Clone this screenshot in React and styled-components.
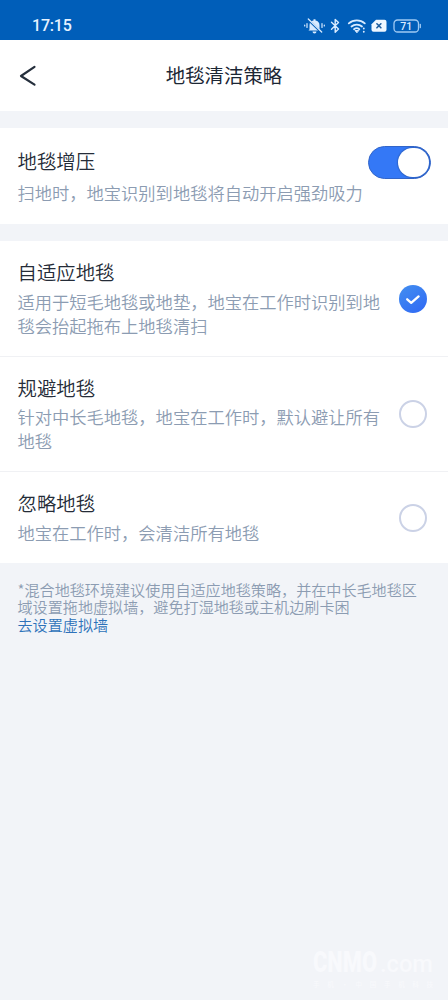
import React, { useState } from 'react';
import styled, { createGlobalStyle } from 'styled-components';

const GlobalStyle = createGlobalStyle`
* {
    box-sizing: border-box;
}
body {
    margin: 0;
    background: #f2f4f8;
    font-family: "Noto Sans CJK SC", sans-serif;
}
`
const Screen = styled.div`
position: relative;
display: flex;
flex-direction: column;
width: 448px;
height: 1000px;
overflow: hidden;
background: #f2f4f8;
`
const StatusBar = styled.div`
display: flex;
justify-content: space-between;
align-items: center;
height: 40px;
padding: 12px 26px 0 32px;
background: #005eb9;
color: #e6f2ff;
`
const Clock = styled.span`
font-family: Roboto, sans-serif;
font-size: 16px;
font-weight: 500;
line-height: 20px;
letter-spacing: -0.2px;
`
const Header = styled.header`
display: grid;
grid-template-columns: 40px 1fr 40px;
align-items: center;
height: 71px;
padding: 0 16px 2px;
background: #fff;
`
const BackButton = styled.button`
display: flex;
padding: 2px 0 0 3px;
border: none;
background: none;
cursor: pointer;
`
const PageTitle = styled.h1`
margin: 0;
text-align: center;
font-size: 19.4px;
font-weight: 400;
line-height: 28px;
color: #1c2735;
`
const Card = styled.section`
margin-top: 17px;
background: #fff;
`
const Row = styled.div`
display: flex;
justify-content: space-between;
height: ${props => props.$height}px;
padding: ${props => props.$top}px 17px 0 17.5px;
border-bottom: ${props => props.$divided ? '1px solid #f0f1f4' : 'none'};
`
const RowTitle = styled.h2`
margin: 0;
font-size: 19.4px;
font-weight: 350;
line-height: 28px;
color: #252c38;
`
const RowText = styled.p`
width: ${props => props.$wide ? 'auto' : '364px'};
margin: ${props => props.$gap}px 0 0;
font-size: 17.27px;
font-weight: 350;
line-height: 24px;
white-space: ${props => props.$wide ? 'nowrap' : 'normal'};
color: #8c9cb2;
`
const RowHead = styled.div`
display: flex;
flex-direction: column;
width: 350px;
padding-top: 1px;
`
const Switch = styled.button`
display: flex;
justify-content: ${props => props.$on ? 'flex-end' : 'flex-start'};
flex: none;
width: 63px;
height: 33px;
padding: 1px;
border: 1px solid #3265c9;
border-radius: 17px;
background: ${props => props.$on ? '#3478f6' : '#d5dae5'};
cursor: pointer;
`
const Knob = styled.span`
width: 31px;
height: 29px;
border-radius: 15px;
background: #fff;
box-shadow: 0 0 1px 1px rgba(30, 55, 105, 0.3);
`
const Radio = styled.button`
display: flex;
justify-content: center;
align-items: center;
flex: none;
width: 28px;
height: 28px;
margin-top: ${props => props.$offset}px;
margin-right: 4px;
padding: 0;
border: ${props => props.$checked ? 'none' : '2px solid #cbd2e6'};
border-radius: 50%;
background: ${props => props.$checked ? 'linear-gradient(145deg, #438ff0, #2f68f4)' : '#fff'};
cursor: pointer;
`
const Note = styled.footer`
padding: 17.5px 17.5px 0;
font-size: 15.1px;
font-weight: 350;
line-height: 17.4px;
color: #8c9cb2;
`
const NoteText = styled.p`
width: 405px;
margin: 0;
`
const NoteLink = styled.a`
display: block;
margin-top: 1px;
color: #2d72ba;
cursor: pointer;
`
const Watermark = styled.div`
position: absolute;
right: 14px;
bottom: 10px;
width: 121px;
`
const StatusIcons = () => (
    <svg width="120" height="20" viewBox="302 16 120 20" fill="none" stroke="#d9ebff" strokeWidth="1.5" strokeLinecap="round" strokeLinejoin="round">
        <path d="M309.5 29.5v-4a5 5 0 0 1 4-5v-1.3h2v1.3a5 5 0 0 1 4 5v4l1 1h-12z" fill="#d9ebff" stroke="none" />
        <path d="M312.5 31.5h4a2 2 0 0 1-4 0z" fill="#d9ebff" stroke="none" />
        <path d="M307.5 19l14 13.5" stroke="#005eb9" strokeWidth="2.4" />
        <path d="M308.3 19l13.4 13" strokeWidth="1.3" />
        <path d="M307 23.5v4M304.7 25v1M322 23.5v4M324.3 25v1" strokeWidth="1.2" />
        <path d="M331.5 22.3l7 6.8-3.3 3.1V19.5l3.3 3.1-7 6.6" strokeWidth="1.4" />
        <path d="M348.8 23.4a12 12 0 0 1 16 0M351.5 26.5a8 8 0 0 1 10.5 0M354 29.2a4.2 4.2 0 0 1 5.3 0" strokeWidth="1.8" />
        <path d="M356.7 32.5l-1.7-2h3.4z" fill="#d9ebff" strokeWidth="1" />
        <path d="M363.8 28.3v.2M363.8 31.6v.2" strokeWidth="1.8" />
        <path d="M376 19.7h8.5q2 0 2 2v8.1q0 2-2 2h-11q-2 0-2-2v-5.6z" fill="#eef7ff" stroke="none" />
        <path d="M376.9 23.8l4 4M380.9 23.8l-4 4" stroke="#1c5d9f" strokeWidth="1.6" />
        <rect x="394" y="20" width="24.5" height="12" rx="3.6" stroke="#9fcaf4" strokeWidth="1.3" />
        <path d="M420.3 24.5v3" stroke="#9fcaf4" strokeWidth="1.3" />
        <text x="406.3" y="29.8" textAnchor="middle" fill="#d9ebff" stroke="none" fontFamily="Roboto, sans-serif" fontSize="10.5" fontWeight="500">71</text>
    </svg>
)

const WatermarkLogo = styled.svg`
display: block;
fill: #f8f9fc;
`

const Logo = () => (
    <WatermarkLogo width="121" height="48" viewBox="0 -8 121 48">
        <text x="0" y="22" textLength="64" lengthAdjust="spacingAndGlyphs" fontFamily="Roboto, sans-serif" fontSize="29" fontWeight="900">CNMO</text>
        <text x="67" y="22" textLength="53" lengthAdjust="spacingAndGlyphs" fontFamily="Roboto, sans-serif" fontSize="23" fontWeight="500">.com</text>
        <text x="0" y="36.5" textLength="120" fontFamily="Noto Sans CJK SC, sans-serif" fontSize="6.5" fontWeight="500">手机·中国手机科技</text>
    </WatermarkLogo>
)

const options = [
    {
        title: '自适应地毯',
        text: '适用于短毛地毯或地垫，地宝在工作时识别到地毯会抬起拖布上地毯清扫',
        height: 116,
        offset: 27
    },
    {
        title: '规避地毯',
        text: '针对中长毛地毯，地宝在工作时，默认避让所有地毯',
        height: 115,
        offset: 26
    },
    {
        title: '忽略地毯',
        text: '地宝在工作时，会清洁所有地毯',
        height: 91,
        offset: 15
    }
];

const App = () => {
    const [boost, setBoost] = useState(true);
    const [selected, setSelected] = useState(0);

    return (
        <Screen>
            <GlobalStyle />
            <StatusBar>
                <Clock>17:15</Clock>
                <StatusIcons />
            </StatusBar>
            <Header>
                <BackButton>
                    <svg width="18" height="22" viewBox="0 0 18 22" fill="none" stroke="#252f3c" strokeWidth="2.2" strokeLinecap="round" strokeLinejoin="round">
                        <path d="M15.5 1.8L2 11l13.5 8.7" />
                    </svg>
                </BackButton>
                <PageTitle>地毯清洁策略</PageTitle>
            </Header>
            <Card>
                <Row $height={96} $top={18}>
                    <RowHead>
                        <RowTitle>地毯增压</RowTitle>
                        <RowText $wide $gap={6}>扫地时，地宝识别到地毯将自动开启强劲吸力</RowText>
                    </RowHead>
                    <Switch $on={boost} onClick={() => setBoost(!boost)}>
                        <Knob />
                    </Switch>
                </Row>
            </Card>
            <Card>
                {options.map((option, index) => (
                    <Row key={option.title} $height={option.height} $top={17} $divided={index < options.length - 1}>
                        <div>
                            <RowTitle>{option.title}</RowTitle>
                            <RowText $gap={index === 1 ? 3 : 4}>{option.text}</RowText>
                        </div>
                        <Radio $checked={selected === index} $offset={option.offset} onClick={() => setSelected(index)}>
                            {selected === index &&
                                <svg width="16" height="14" viewBox="0 0 16 14" fill="none" stroke="#fff" strokeWidth="2.3" strokeLinecap="round" strokeLinejoin="round">
                                    <path d="M2.2 7.3l4 3.5 7.4-6.4" />
                                </svg>
                            }
                        </Radio>
                    </Row>
                ))}
            </Card>
            <Note>
                <NoteText>*混合地毯环境建议使用自适应地毯策略，并在中长毛地毯区域设置拖地虚拟墙，避免打湿地毯或主机边刷卡困</NoteText>
                <NoteLink>去设置虚拟墙</NoteLink>
            </Note>
            <Watermark>
                <Logo />
            </Watermark>
        </Screen>
    );
}

export default App;
